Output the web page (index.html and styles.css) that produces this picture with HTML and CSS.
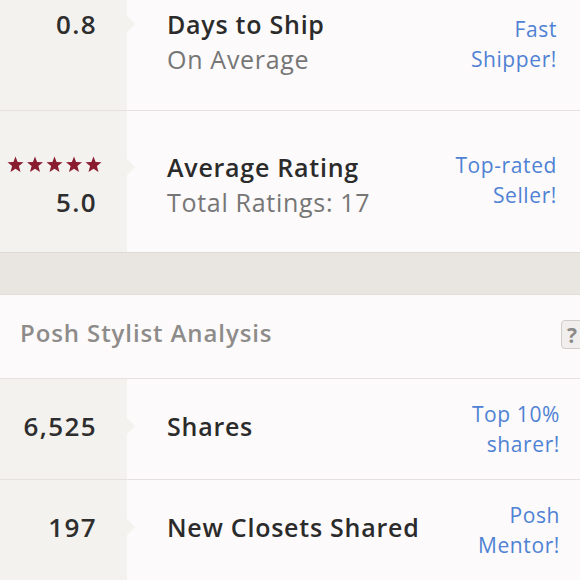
FILE: index.html
```html
<!DOCTYPE html>
<html lang="en">
<head>
    <meta charset="UTF-8">
    <meta name="viewport" content="width=device-width, initial-scale=1.0">
    <title>Closet stats</title>
    <link rel="stylesheet" href="styles.css">
</head>
<body>
    <div class="page">
        <div class="stats">
            <div class="stat-row stat-row-first">
                <div class="stat-value stat-value-top">0.8</div>
                <div class="stat-info">
                    <div class="stat-title">Days to Ship</div>
                    <div class="stat-sub">On Average</div>
                </div>
                <div class="stat-badge">Fast<br>Shipper!</div>
            </div>
            <div class="stat-row stat-row-rating">
                <div class="stat-value">
                    <svg class="stars" width="96" height="17" viewBox="0 0 96 17">
                        <defs>
                            <polygon id="star" points="8.5,0.5 10.6,6 16.5,6.3 11.9,10.1 13.5,16 8.5,12.7 3.5,16 5.1,10.1 0.5,6.3 6.4,6"/>
                        </defs>
                        <use href="#star" x="0"/>
                        <use href="#star" x="19.5"/>
                        <use href="#star" x="39"/>
                        <use href="#star" x="58.5"/>
                        <use href="#star" x="78"/>
                    </svg>
                    <div class="rating-num">5.0</div>
                </div>
                <div class="stat-info">
                    <div class="stat-title">Average Rating</div>
                    <div class="stat-sub">Total Ratings: 17</div>
                </div>
                <div class="stat-badge">Top-rated<br>Seller!</div>
            </div>
        </div>

        <div class="band"></div>

        <div class="section-head">
            <h2>Posh Stylist Analysis</h2>
            <button class="help-btn">?</button>
        </div>

        <div class="stats">
            <div class="stat-row stat-row-plain">
                <div class="stat-value">6,525</div>
                <div class="stat-info">
                    <div class="stat-title">Shares</div>
                </div>
                <div class="stat-badge">Top 10%<br>sharer!</div>
            </div>
            <div class="stat-row stat-row-plain">
                <div class="stat-value">197</div>
                <div class="stat-info">
                    <div class="stat-title">New Closets Shared</div>
                </div>
                <div class="stat-badge">Posh<br>Mentor!</div>
            </div>
        </div>
    </div>
</body>
</html>
```

FILE: styles.css
```css
body {
    margin: 0;
    padding: 0;
    background-color: #fcfafa;
    font-family: "Open Sans", Lato, sans-serif;
    color: #2b2b2b;
    overflow: hidden;
}

.page {
    width: 580px;
    overflow: hidden;
}

.stat-row {
    display: grid;
    grid-template-columns: 127px 1fr auto;
    align-items: center;
    border-bottom: 1px solid #e4e1de;
    background: linear-gradient(to right, #f4f2ef 127px, #fcfafa 127px);
    box-sizing: border-box;
}

.stat-row-first {
    height: 111px;
    padding-bottom: 27px;
}

.stat-row-first .stat-badge {
    margin-top: 5px;
}

.stat-row-rating {
    height: 141px;
    border-bottom: none;
}

.stat-row-rating .stat-value {
    margin-top: 10px;
}

.stat-row-rating .stat-info {
    margin-top: 6px;
}

.stat-row-rating .stat-badge {
    margin-bottom: 4px;
}

.stat-row-plain {
    height: 101px;
}

.stat-row-plain .stat-value,
.stat-row-plain .stat-info {
    margin-bottom: 6px;
}

.stat-row-plain .stat-badge {
    padding-right: 20px;
}

.stat-value {
    padding-right: 30px;
    text-align: right;
    font-size: 26px;
    font-weight: 600;
    letter-spacing: 1.4px;
    line-height: 30px;
    color: #2e2e2e;
}

.stat-value-top {
    align-self: start;
    margin-top: 9px;
}

.stars {
    display: block;
    margin: 0 -6px 14px auto;
    fill: #8a1c30;
}

.rating-num {
    line-height: 30px;
}

.stat-info {
    position: relative;
    padding-left: 40px;
}

/* little pointer out of the grey column */
.stat-info::before {
    content: "";
    position: absolute;
    left: 0;
    top: 7px;
    border-top: 8px solid transparent;
    border-bottom: 8px solid transparent;
    border-left: 8px solid #f4f2ef;
}

.stat-title {
    font-size: 25px;
    font-weight: 600;
    letter-spacing: 0.75px;
    line-height: 30px;
    color: #2b2b2b;
}

.stat-sub {
    margin-top: 5px;
    font-size: 25px;
    letter-spacing: 0.7px;
    line-height: 30px;
    color: #767676;
}

.stat-badge {
    padding-right: 23px;
    text-align: right;
    font-size: 21px;
    letter-spacing: 0.6px;
    line-height: 30px;
    color: #4f82d4;
}

.band {
    height: 41px;
    background-color: #e9e6e2;
    border-top: 1px solid #dedad6;
    border-bottom: 1px solid #e2dfdb;
}

.section-head {
    display: flex;
    justify-content: space-between;
    align-items: center;
    height: 84px;
    padding-left: 20px;
    padding-bottom: 8px;
    border-bottom: 1px solid #e4e1de;
    box-sizing: border-box;
}

.section-head h2 {
    margin: 0;
    font-size: 24px;
    font-weight: 600;
    letter-spacing: 0.9px;
    color: #8e8c8a;
}

.help-btn {
    width: 22px;
    height: 29px;
    margin-top: 4px;
    margin-right: -3px;
    padding: 0;
    border: 1px solid #cfccc9;
    border-radius: 4px;
    background-color: #f1efed;
    font-family: "Open Sans", sans-serif;
    font-size: 21px;
    font-weight: bold;
    color: #8c8a88;
}
```
